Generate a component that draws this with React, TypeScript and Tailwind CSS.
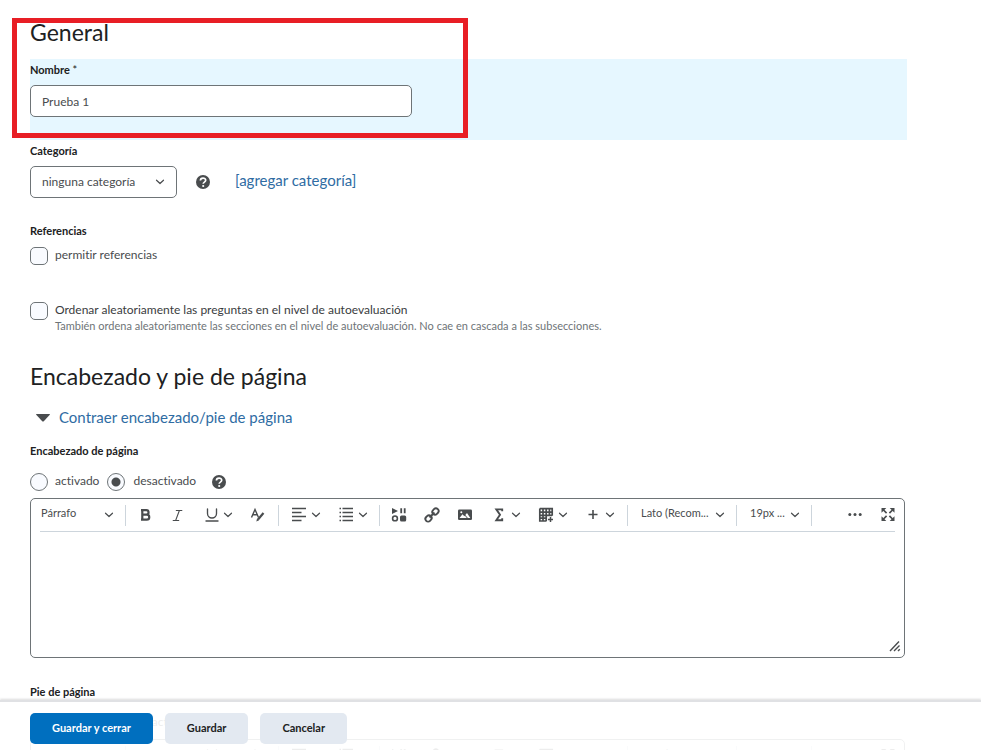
import type { ReactNode } from 'react';
import { Italic, Underline } from 'lucide-react';
import clsx from 'clsx';

function Chevron() {
  return (
    <svg viewBox="0 0 10 10" className="pointer-events-none size-[10px] shrink-0" fill="none" stroke="#494c4e" strokeWidth="1.2" strokeLinecap="round" strokeLinejoin="round" aria-hidden="true">
      <path d="M1.5 3.2 5 6.5 8.5 3.2" />
    </svg>
  );
}

function Icon({ children }: { children: ReactNode }) {
  return (
    <svg viewBox="0 0 20 20" className="size-5 shrink-0" fill="none" stroke="#494c4e" strokeWidth="1.4" aria-hidden="true">
      {children}
    </svg>
  );
}

function HelpButton({ label }: { label: string }) {
  return (
    <button type="button" aria-label={label} className="size-[14px]">
      <svg viewBox="0 0 14 14" className="size-[14px]" aria-hidden="true">
        <circle cx="7" cy="7" r="7" fill="#494c4e" />
        <path d="M4.4 5.5C4.4 2.2 9.7 2.3 9.7 5.3 9.7 7.2 7.2 7 7.2 8.8" fill="none" stroke="#fff" strokeWidth="1.7" />
        <circle cx="7.2" cy="11" r="1.1" fill="#fff" />
      </svg>
    </button>
  );
}

function ToolButton({ label, children }: { label: string; children: ReactNode }) {
  return (
    <button type="button" aria-label={label} className="flex h-8 w-[33px] shrink-0 items-center justify-center">
      {children}
    </button>
  );
}

function ToolMenu({ label, children }: { label: string; children: ReactNode }) {
  return (
    <button type="button" aria-label={label} className="flex h-8 w-[47px] shrink-0 items-center gap-[2px] px-2">
      <span className="flex w-5 justify-center">{children}</span>
      <Chevron />
    </button>
  );
}

function ToolSelect({ label, value, className }: { label: string; value: string; className: string }) {
  return (
    <span className={clsx('grid shrink-0 items-center', className)}>
      <select aria-label={label} className="col-start-1 row-start-1 h-8 w-full appearance-none pb-[3px] text-[11px] text-[#494c4e]">
        <option>{value}</option>
      </select>
      <span className="pointer-events-none col-start-1 row-start-1 justify-self-end">
        <Chevron />
      </span>
    </span>
  );
}

function Separator() {
  return <span className="h-[21px] w-px shrink-0 bg-[#cdd5dc]" />;
}

function Editor({ label }: { label: string }) {
  return (
    <div className="mr-[2px] flex h-40 flex-col rounded-[5px] border border-[#6e7477] bg-white px-[9px]">
      <div className="flex h-[33px] items-center border-b border-[#cdd5dc]">
        <ToolSelect label="Formato" value="Párrafo" className="ml-px mr-[11px] w-[73px]" />
        <Separator />
        <span className="mx-[2px] flex w-[148px]">
          <ToolButton label="Negrita">
            <Icon>
              <path d="M6 5.2H11.3A2.2 2.2 0 0 1 11.3 9.7H7.3M7.3 9.7H11.8A2.4 2.4 0 0 1 11.8 14.6H6M7.3 4.5V15.3" strokeWidth="2.2" />
            </Icon>
          </ToolButton>
          <ToolButton label="Cursiva"><Italic size={15} strokeWidth={1.7} color="#494c4e" /></ToolButton>
          <ToolMenu label="Subrayado"><Underline size={18} strokeWidth={1.8} color="#494c4e" /></ToolMenu>
          <ToolButton label="Color del texto">
            <Icon>
              <path d="M3.5 12.5 7 4.5 10.5 12.5M4.8 9.8H9.2" />
              <path d="M15.5 8 10 14.5" strokeWidth="2.2" />
              <path d="M8.3 16.5 9.1 13.6 11.1 15.2Z" fill="#494c4e" stroke="none" />
            </Icon>
          </ToolButton>
        </span>
        <Separator />
        <span className="mr-1 ml-[2px] flex">
          <ToolMenu label="Alineación">
            <Icon><path d="M3 3.5H17M3 7.5H12.5M3 11.5H17M3 15.5H12.5" strokeWidth="1.4" /></Icon>
          </ToolMenu>
          <ToolMenu label="Listas">
            <Icon>
              <path d="M6.5 3.5H17M6.5 7.5H17M6.5 11.5H17M6.5 15.5H17" strokeWidth="1.4" />
              <path d="M3.5 3.5H5M3.5 7.5H5M3.5 11.5H5M3.5 15.5H5" strokeWidth="1.4" />
            </Icon>
          </ToolMenu>
        </span>
        <Separator />
        <span className="ml-[2px] mr-[5px] flex">
          <ToolButton label="Insertar material">
            <Icon>
              <path d="M3 3 9 6 3 9Z" fill="#494c4e" stroke="none" />
              <path d="M12.2 3.3V8.3M15.7 3.3V8.3" strokeWidth="1.8" />
              <circle cx="6" cy="13.4" r="2.4" strokeWidth="1.6" />
              <rect x="11" y="10.4" width="6.2" height="6.2" rx="1.5" fill="#494c4e" stroke="none" />
            </Icon>
          </ToolButton>
          <ToolButton label="Insertar enlace">
            <Icon>
              <g transform="rotate(-45 10 10)" strokeWidth="1.9">
                <rect x="1.8" y="7.3" width="6.6" height="5.4" rx="2.7" />
                <rect x="11.6" y="7.3" width="6.6" height="5.4" rx="2.7" />
                <path d="M6.5 10H13.5" />
              </g>
            </Icon>
          </ToolButton>
          <ToolButton label="Insertar imagen">
            <Icon>
              <rect x="3" y="4.6" width="14" height="10.4" rx="1.3" fill="#494c4e" stroke="none" />
              <path d="M4.5 13 7.5 9.3 9.3 11.3 12 8 15.3 13Z" fill="#fff" stroke="none" />
              <path d="m9.2 9.3 3.4 4" strokeWidth="1" />
              <circle cx="6.3" cy="7.3" r="1" fill="#fff" stroke="none" />
            </Icon>
          </ToolButton>
          <ToolMenu label="Ecuación">
            <Icon><path d="M13.2 6.3V4.4H7.3L11 9.8 7.3 15.2H13.2V13.3" strokeWidth="1.9" /></Icon>
          </ToolMenu>
          <ToolMenu label="Tabla">
            <Icon>
              <path d="M3.8 3.6H16.2V10.8M3.8 3.6V16H10.5M3.8 7.2H16.2M3.8 10.4H16M3.8 13.2H10.5M7 3.6V16M10.2 3.6V16M13.4 3.6V10.8" strokeWidth="1.7" />
              <path d="M14.5 12V17M12 14.5H17" strokeWidth="1.5" />
            </Icon>
          </ToolMenu>
          <ToolMenu label="Más elementos">
            <Icon><path d="M10 5V14M5.5 9.5H14.5" strokeWidth="1.6" /></Icon>
          </ToolMenu>
        </span>
        <Separator />
        <ToolSelect label="Fuente" value="Lato (Recom..." className="ml-[13px] mr-[11px] w-[84px]" />
        <Separator />
        <ToolSelect label="Tamaño" value="19px ..." className="ml-[13px] mr-[11px] w-[50px]" />
        <Separator />
        <span className="-mr-[9px] ml-auto flex">
          <ToolButton label="Más acciones">
            <Icon>
              <g fill="#494c4e" stroke="none">
                <circle cx="4.8" cy="9.5" r="1.5" />
                <circle cx="10" cy="9.5" r="1.5" />
                <circle cx="15.2" cy="9.5" r="1.5" />
              </g>
            </Icon>
          </ToolButton>
          <ToolButton label="Pantalla completa">
            <Icon>
              <g fill="#494c4e" stroke="none">
                <path d="M3.5 3H8.3L3.5 7.8ZM16.5 3V7.8L11.7 3ZM3.5 16V11.2L8.3 16ZM16.5 16H11.7L16.5 11.2Z" />
              </g>
              <path d="M5 4.5 8.6 8.1M15 4.5 11.4 8.1M5 14.5 8.6 10.9M15 14.5 11.4 10.9" strokeWidth="1.7" />
            </Icon>
          </ToolButton>
        </span>
      </div>
      <textarea aria-label={label} className="w-full grow resize-none text-[12px] outline-none" />
      <svg viewBox="0 0 12 12" className="-mr-[6px] mb-[5px] size-3 shrink-0 self-end" stroke="#494c4e" strokeWidth="1.4" aria-hidden="true">
        <path d="M1 11 10 1.5M5 11 10.5 5.5M9 11 10.8 9.2" />
      </svg>
    </div>
  );
}

function EditorGroup({ name, title, help }: { name: string; title: string; help: string }) {
  const radio =
    'size-[18px] shrink-0 appearance-none rounded-full border border-[#6e7477] bg-[#f9fbff] checked:bg-[radial-gradient(circle,#494c4e_4px,#f9fbff_5px)]';

  return (
    <fieldset>
      <legend className="text-[11px] leading-4 font-bold">{title}</legend>
      <div className="mt-[14px] mb-[7px] flex h-[18px] items-center">
        <input type="radio" id={`${name}-on`} name={name} className={radio} />
        <label htmlFor={`${name}-on`} className="mr-2 ml-[7px] pb-[2px] text-[12px] leading-4 text-[#494c4e]">activado</label>
        <input type="radio" id={`${name}-off`} name={name} defaultChecked className={radio} />
        <label htmlFor={`${name}-off`} className="mr-4 ml-2 pb-[2px] text-[12px] leading-4 text-[#494c4e]">desactivado</label>
        <HelpButton label={help} />
      </div>
      <Editor label={title} />
    </fieldset>
  );
}

const checkbox = 'size-[18px] shrink-0 appearance-none rounded-[5px] border border-[#6e7477] bg-[#f9fbff]';

export default function App() {
  return (
    <div className="relative h-screen overflow-hidden bg-white font-['Lato',sans-serif] text-[#202122] [font-variant-ligatures:none]">
      <main className="h-full overflow-y-auto pt-4 pr-[74px] pl-[30px] [scrollbar-width:none]">
        <h2 className="mb-[11px] text-[23px] leading-8">General</h2>
        <div className="bg-[#e6f7ff] pt-[3px] pb-[23px]">
          <label htmlFor="nombre" className="block text-[11px] leading-4 font-bold">
            Nombre <span className="font-normal">*</span>
          </label>
          <input
            id="nombre"
            type="text"
            defaultValue="Prueba 1"
            className="mt-[7px] block h-8 w-[382px] rounded-[5px] border border-[#6e7477] bg-white px-[11px] text-[12px] text-[#494c4e]"
          />
        </div>

        <label htmlFor="categoria" className="mt-[3px] mb-[7px] block text-[11px] leading-4 font-bold">Categoría</label>
        <div className="flex h-8 items-center">
          <span className="grid w-[147px] items-center">
            <select id="categoria" className="col-start-1 row-start-1 h-8 w-full appearance-none rounded-[5px] border border-[#6e7477] bg-white pr-6 pl-[11px] text-[12px] text-[#494c4e]">
              <option>ninguna categoría</option>
            </select>
            <span className="pointer-events-none col-start-1 row-start-1 mr-3 justify-self-end">
              <Chevron />
            </span>
          </span>
          <span className="mr-[25px] ml-[19px] flex">
            <HelpButton label="Ayuda sobre categorías" />
          </span>
          <a href="#categoria" className="pb-1 text-[15px] leading-5 text-[#2f6ca3]">[agregar categoría]</a>
        </div>

        <fieldset className="mt-[25px]">
          <legend className="text-[11px] leading-4 font-bold">Referencias</legend>
          <div className="mt-2 flex gap-[7px]">
            <input type="checkbox" id="referencias" className={checkbox} />
            <label htmlFor="referencias" className="text-[12px] leading-4 text-[#494c4e]">permitir referencias</label>
          </div>
        </fieldset>

        <div className="mt-[37px] flex gap-[7px]">
          <input type="checkbox" id="ordenar" aria-describedby="ordenar-info" className={checkbox} />
          <div>
            <label htmlFor="ordenar" className="block text-[12px] leading-4 text-[#3a3c3e]">
              Ordenar aleatoriamente las preguntas en el nivel de autoevaluación
            </label>
            <p id="ordenar-info" className="text-[11px] leading-4 text-[#6e7477]">
              También ordena aleatoriamente las secciones en el nivel de autoevaluación. No cae en cascada a las subsecciones.
            </p>
          </div>
        </div>

        <h2 className="mt-[26px] text-[23px] leading-8">Encabezado y pie de página</h2>
        <button type="button" aria-expanded="true" className="mt-[15px] mb-4 flex items-center gap-[9px] pl-[6px] text-[15px] leading-5 text-[#2f6ca3]">
          <svg viewBox="0 0 14 8" className="mt-[2px] h-2 w-[14px]" aria-hidden="true">
            <path d="M0 .5Q0 0 .6 0H13.4Q14 0 14 .5L8 7Q7 8 6 7Z" fill="#494c4e" />
          </svg>
          Contraer encabezado/pie de página
        </button>

        <EditorGroup name="encabezado" title="Encabezado de página" help="Ayuda sobre el encabezado" />
        <div className="mt-[26px] pb-16">
          <EditorGroup name="pie" title="Pie de página" help="Ayuda sobre el pie" />
        </div>
      </main>

      {/* Highlight around the name field */}
      <div className="pointer-events-none absolute top-[18px] left-3 h-[120px] w-[456px] border-5 border-[#e81e25]" />

      {/* Floating action bar */}
      <footer className="absolute inset-x-0 bottom-0 flex gap-3 border-t-2 border-[#e0e1e4] bg-white/90 px-[30px] pt-[11px] pb-[6px] shadow-[0_-1px_2px_rgba(73,76,78,0.2)]">
        <button type="button" className="h-[31px] rounded-[5px] bg-[#006fbf] px-[22px] text-[11px] font-bold text-white">Guardar y cerrar</button>
        <button type="button" className="h-[31px] rounded-[5px] bg-[#e3e9f1] px-[22px] text-[11px] font-bold">Guardar</button>
        <button type="button" className="h-[31px] rounded-[5px] bg-[#e3e9f1] px-[22px] text-[11px] font-bold">Cancelar</button>
      </footer>
    </div>
  );
}
